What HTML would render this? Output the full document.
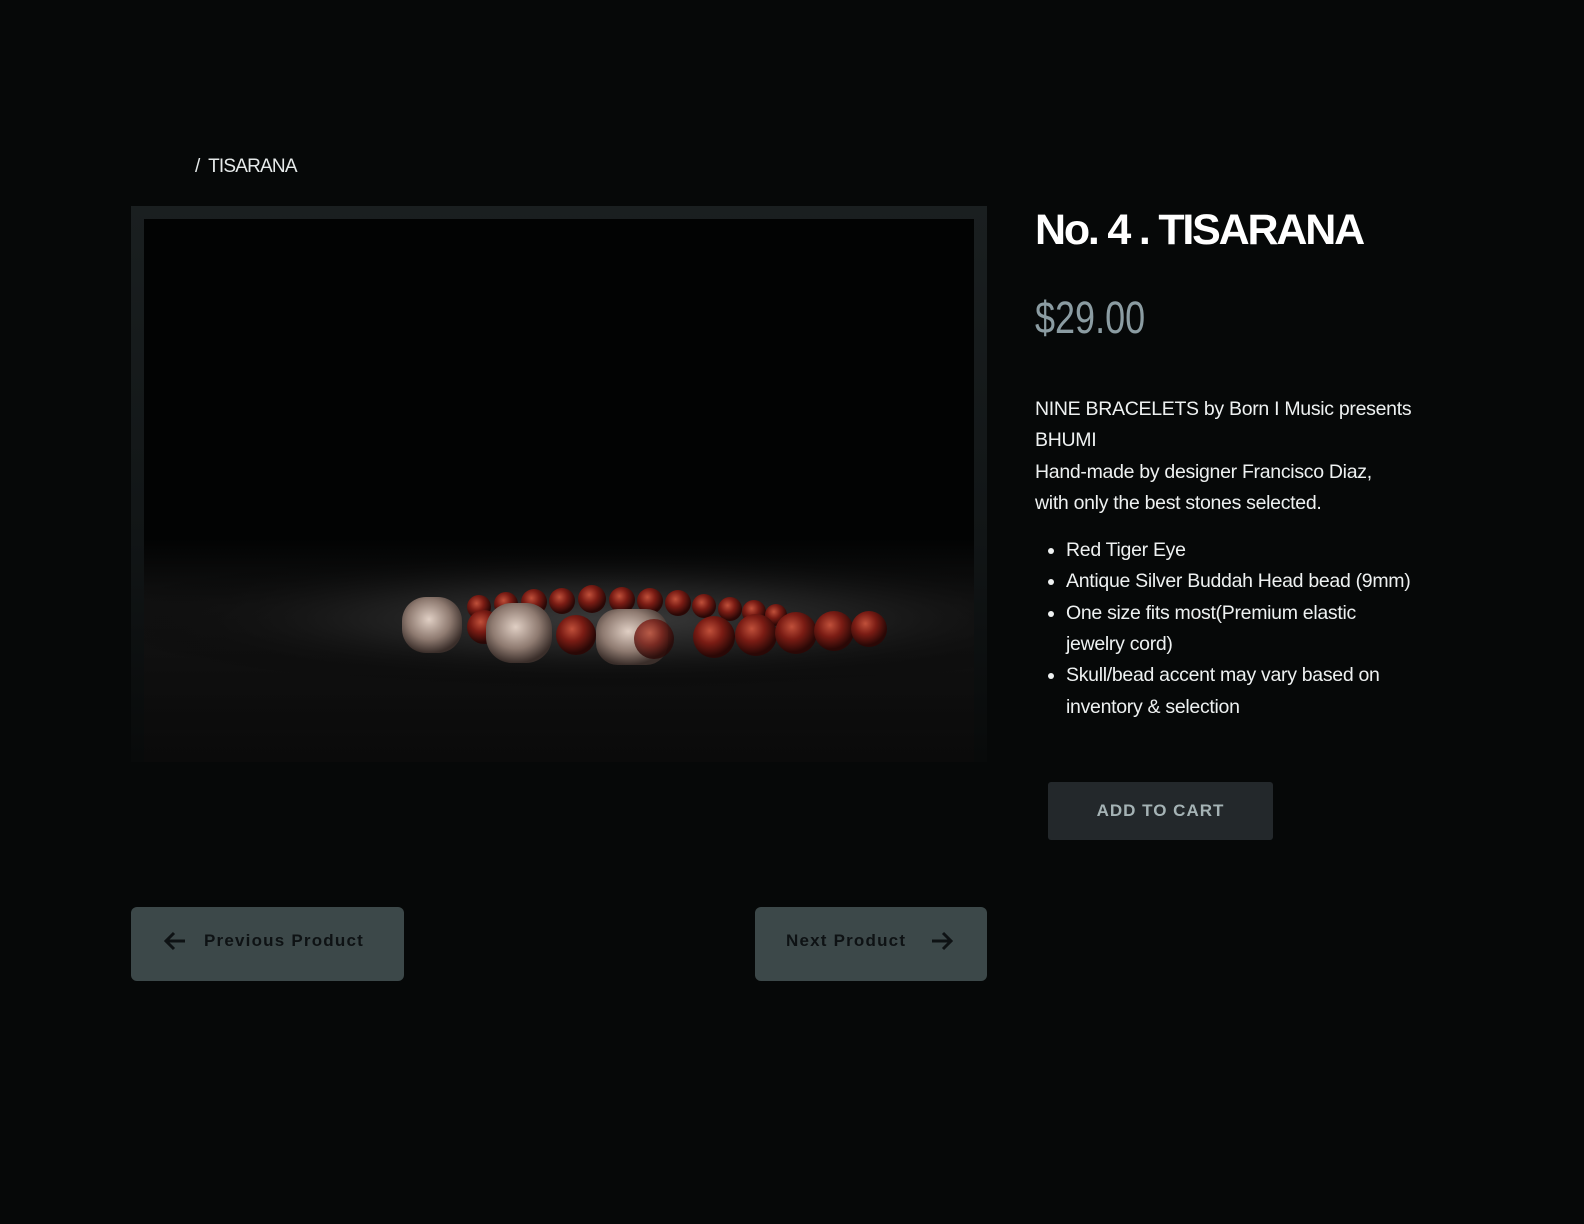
<!DOCTYPE html>
<html><head><meta charset="utf-8"><style>
html,body{margin:0;padding:0;background:#060808;width:1584px;height:1224px;overflow:hidden;font-family:"Liberation Sans",sans-serif;}
.abs{position:absolute}
.bc{left:195px;top:156px;color:#e6eaea;font-size:19px;letter-spacing:-0.8px}
.frame{left:131px;top:206px;width:856px;height:556px;background:linear-gradient(#1a1f20,#111516 60%,#080a0a)}
.img{left:144px;top:219px;width:830px;height:543px;background:#020303;overflow:hidden}
h1{position:absolute;left:1035px;top:206px;margin:0;color:#fff;font-size:43px;font-weight:bold;letter-spacing:-2.2px;}
.price{left:1035px;top:292px;color:#8b9ca2;font-size:45px;transform:scaleX(0.8);transform-origin:left;font-weight:normal}
.desc{left:1035px;top:394px;width:410px;color:#eef1f1;font-size:19.5px;line-height:31.3px;letter-spacing:-0.3px}
ul{margin:16px 0 0 0;padding:0 0 0 31px}
li{margin:0}
.cart{left:1048px;top:782px;width:225px;height:58px;background:#23282b;border-radius:3px;color:#a5b3b5;font-size:17px;font-weight:bold;letter-spacing:1px;text-align:center;line-height:58px}
.nav{top:907px;height:74px;background:#3c4849;border-radius:6px;color:#0e1214;font-size:17px;font-weight:bold;letter-spacing:1.2px;line-height:68px}
</style></head><body>
<div class="abs bc">/&nbsp; TISARANA</div>
<div class="abs frame"></div>
<div class="abs img">
<svg width="830" height="543" viewBox="0 0 830 543">
<defs>
<radialGradient id="floor" cx="0.5" cy="0.5" r="0.5"><stop offset="0" stop-color="#3a3a3a"/><stop offset="0.5" stop-color="#1c1c1c"/><stop offset="1" stop-color="#050505" stop-opacity="0"/></radialGradient>
<linearGradient id="fl" x1="0" y1="0" x2="0" y2="1"><stop offset="0" stop-color="#020303"/><stop offset="0.3" stop-color="#121212"/><stop offset="1" stop-color="#0a0a0a"/></linearGradient>
<radialGradient id="bead" cx="0.4" cy="0.35" r="0.6"><stop offset="0" stop-color="#c0503a"/><stop offset="0.5" stop-color="#7a1c14"/><stop offset="1" stop-color="#2a0806"/></radialGradient>
<radialGradient id="silver" cx="0.45" cy="0.4" r="0.6"><stop offset="0" stop-color="#e0cfc4"/><stop offset="0.6" stop-color="#8e7a70"/><stop offset="1" stop-color="#3a2e2a"/></radialGradient>
</defs>
<rect x="0" y="320" width="830" height="223" fill="url(#fl)"/>
<ellipse cx="470" cy="400" rx="520" ry="70" fill="url(#floor)"/>
<g>
<circle cx="335" cy="388" r="12" fill="url(#bead)"/><circle cx="362" cy="385" r="12" fill="url(#bead)"/>
<circle cx="390" cy="383" r="13" fill="url(#bead)"/><circle cx="418" cy="382" r="13" fill="url(#bead)"/>
<circle cx="448" cy="380" r="14" fill="url(#bead)"/><circle cx="478" cy="381" r="13" fill="url(#bead)"/>
<circle cx="506" cy="382" r="13" fill="url(#bead)"/><circle cx="534" cy="384" r="13" fill="url(#bead)"/>
<circle cx="560" cy="387" r="12" fill="url(#bead)"/><circle cx="586" cy="390" r="12" fill="url(#bead)"/>
<circle cx="610" cy="393" r="12" fill="url(#bead)"/><circle cx="632" cy="396" r="11" fill="url(#bead)"/>
<circle cx="340" cy="408" r="17" fill="url(#bead)"/>
<circle cx="432" cy="416" r="20" fill="url(#bead)"/>
<circle cx="570" cy="418" r="21" fill="url(#bead)"/>
<circle cx="612" cy="416" r="21" fill="url(#bead)"/>
<circle cx="652" cy="414" r="21" fill="url(#bead)"/>
<circle cx="690" cy="412" r="20" fill="url(#bead)"/>
<circle cx="725" cy="410" r="18" fill="url(#bead)"/>
<rect x="258" y="378" width="60" height="56" rx="24" fill="url(#silver)"/>
<rect x="342" y="384" width="66" height="60" rx="26" fill="url(#silver)"/>
<rect x="452" y="390" width="72" height="56" rx="22" fill="url(#silver)"/>
<circle cx="510" cy="420" r="20" fill="url(#bead)" opacity="0.8"/>
</g>
</svg>
</div>
<h1>No. 4 . TISARANA</h1>
<div class="abs price">$29.00</div>
<div class="abs desc">NINE BRACELETS by Born I Music presents<br>BHUMI<br>Hand-made by designer Francisco Diaz,<br>with only the best stones selected.
<ul><li>Red Tiger Eye</li><li>Antique Silver Buddah Head bead (9mm)</li><li>One size fits most(Premium elastic<br>jewelry cord)</li><li>Skull/bead accent may vary based on<br>inventory &amp; selection</li></ul></div>
<div class="abs cart">ADD TO CART</div>
<div class="abs nav" style="left:131px;width:273px;">
<svg class="abs" style="left:32px;top:24px" width="24" height="20" viewBox="0 0 24 20"><path d="M22 10H3M11 2L3 10l8 8" stroke="#0e1214" stroke-width="3" fill="none"/></svg>
<span class="abs" style="left:73px;top:0">Previous Product</span></div>
<div class="abs nav" style="left:755px;width:232px;">
<span class="abs" style="left:31px;top:0">Next Product</span>
<svg class="abs" style="left:175px;top:24px" width="24" height="20" viewBox="0 0 24 20"><path d="M2 10h19M13 2l8 8-8 8" stroke="#0e1214" stroke-width="3" fill="none"/></svg></div>
</body></html>
